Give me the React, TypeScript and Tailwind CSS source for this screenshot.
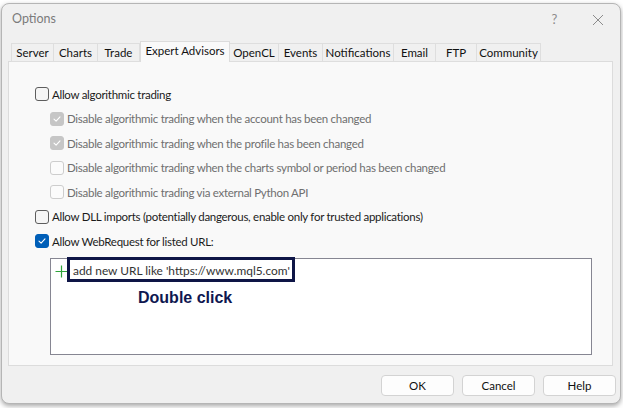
import React from 'react'

const TABS = ['Server', 'Charts', 'Trade', 'Expert Advisors', 'OpenCL', 'Events', 'Notifications', 'Email', 'FTP', 'Community']
const TAB_W: Record<string, number> = {
  Server: 43,
  Charts: 44,
  Trade: 42,
  'Expert Advisors': 90,
  OpenCL: 49,
  Events: 44,
  Notifications: 71,
  Email: 42,
  FTP: 41,
  Community: 64,
}

type BoxKind = 'off' | 'on' | 'dis-on' | 'dis-off'

function Check({ kind }: { kind: BoxKind }) {
  const box =
    kind === 'on'
      ? 'bg-[#005fb8] border-[#005fb8]'
      : kind === 'dis-on'
        ? 'bg-[#c6c6c6] border-[#c6c6c6]'
        : kind === 'dis-off'
          ? 'bg-[#fbfbfb] border-[#cdcdcd]'
          : 'bg-[#f5f5f5] border-[#5d5d5d]'
  return (
    <span className={`flex h-[14px] w-[14px] shrink-0 items-center justify-center rounded-[3px] border ${box}`}>
      {(kind === 'on' || kind === 'dis-on') && (
        <svg width="10" height="10" viewBox="0 0 10 10" fill="none">
          <path d="M2 5.2 L4.1 7.2 L8 2.8" stroke="white" strokeWidth="1.1" strokeLinecap="round" strokeLinejoin="round" />
        </svg>
      )}
    </span>
  )
}

function Row({ kind, label, sub }: { kind: BoxKind; label: string; sub?: boolean }) {
  const dis = kind === 'dis-on' || kind === 'dis-off'
  return (
    <div className={`flex h-[24.5px] items-center gap-[3px] ${sub ? 'pl-[41px]' : 'pl-[26px]'}`}>
      <Check kind={kind} />
      <span className={dis ? 'text-[#6f6f6f]' : 'text-[#1b1b1b]'}>{label}</span>
    </div>
  )
}

export default function App() {
  return (
    <div
      className="relative h-[408px] w-[623px] overflow-hidden bg-white text-[11.5px] leading-none tracking-[-0.28px]"
      style={{ fontFamily: 'Lato, "Noto Sans", sans-serif' }}
    >
      <div className="ml-[1px] mt-[3px] flex h-[401px] w-[620px] flex-col rounded-[8px] border border-[#b5b5b5] bg-[#f0f0f0] shadow-[0_2px_5px_rgba(0,0,0,0.35)]">
        {/* title bar */}
        <div className="flex h-[36px] shrink-0 items-start pl-[10px] pr-[14px] pt-[9px] text-[#7b7b7b]">
          <span className="text-[12.5px] tracking-normal">Options</span>
          <span className="ml-auto mr-[35px] text-[13px] text-[#8c8c8c]">?</span>
          <svg width="12" height="12" viewBox="0 0 12 12" className="mr-[2px] mt-[1px]">
            <path d="M1 1 L11 11 M11 1 L1 11" stroke="#8c8c8c" strokeWidth="1" />
          </svg>
        </div>

        {/* tabs */}
        <div className="relative z-10 -mb-px flex h-[22px] shrink-0 items-end pl-[9px] tracking-normal">
          {TABS.map((t) => {
            const active = t === 'Expert Advisors'
            return (
              <div
                key={t}
                style={{ width: TAB_W[t] }}
                className={
                  active
                    ? 'flex h-[21px] items-center justify-center border border-b-0 border-[#dcdcdc] bg-[#f9f9f9] pb-[2px] text-[#111]'
                    : 'flex h-[19px] items-center justify-center border-y border-r border-[#dedede] bg-[#f0f0f0] text-[#111] first:border-l'
                }
              >
                {t}
              </div>
            )
          })}
        </div>

        {/* panel */}
        <div className="ml-[6px] h-[305px] w-[605px] shrink-0 border border-[#dcdcdc] bg-[#f9f9f9] pt-[20px]">
          <Row kind="off" label="Allow algorithmic trading" />
          <Row kind="dis-on" sub label="Disable algorithmic trading when the account has been changed" />
          <Row kind="dis-on" sub label="Disable algorithmic trading when the profile has been changed" />
          <Row kind="dis-off" sub label="Disable algorithmic trading when the charts symbol or period has been changed" />
          <Row kind="dis-off" sub label="Disable algorithmic trading via external Python API" />
          <Row kind="off" label="Allow DLL imports (potentially dangerous, enable only for trusted applications)" />
          <Row kind="on" label="Allow WebRequest for listed URL:" />

          <div className="relative ml-[41px] mt-[4.5px] h-[97px] w-[542px] border border-[#868692] bg-white">
            <div className="flex h-[24px] items-center pl-[4px] text-[11.9px] tracking-normal text-[#333]">
              <svg width="13" height="13" viewBox="0 0 13 13" className="mr-[5px]">
                <path d="M6.5 0.5 V12.5 M0.5 6.5 H12.5" stroke="#2fa33a" strokeWidth="1.2" />
              </svg>
              <span>add new URL like 'https://www.mql5.com'</span>
            </div>
            <div className="absolute left-[16px] top-[-2px] h-[25px] w-[228px] border-[3px] border-[#0e1546]" />
            <div
              className="ml-[87px] mt-[7px] text-[16px] font-bold tracking-normal text-[#0f1750]"
              style={{ fontFamily: '"Liberation Sans", Arial, sans-serif' }}
            >
              Double click
            </div>
          </div>
        </div>

        {/* buttons */}
        <div className="mt-[9px] flex justify-end gap-[8px] pr-[4px] tracking-normal">
          {['OK', 'Cancel', 'Help'].map((b) => (
            <div
              key={b}
              className="flex h-[21px] w-[73px] items-center justify-center rounded-[4px] border border-[#d3d3d3] bg-[#fdfdfd] text-[#111]"
            >
              {b}
            </div>
          ))}
        </div>
      </div>
    </div>
  )
}
